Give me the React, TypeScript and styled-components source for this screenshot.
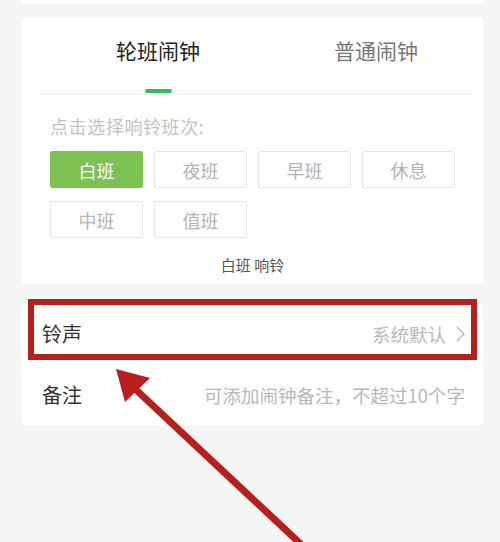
import React from "react";
import styled, { createGlobalStyle } from "styled-components";

const Global = createGlobalStyle`
  html, body { margin: 0; padding: 0; background: #f5f5f5; }
  body { font-family: "Noto Sans CJK SC", "Noto Sans", sans-serif; }
`;

const Page = styled.div`
  position: relative;
  width: 500px;
  height: 542px;
  overflow: hidden;
  background: #f5f5f5;
  padding: 0 17px 0 22px;
  box-sizing: border-box;
  display: flex;
  flex-direction: column;
`;

const Stub = styled.div`
  height: 4px;
  background: #fff;
`;

const Card = styled.div<{ $top: number }>`
  margin-top: ${(p) => p.$top}px;
  background: #fff;
  border-radius: 2px;
`;

const Tabs = styled.div`
  display: grid;
  grid-template-columns: 218px 218px;
  padding-left: 27px;
`;

const Tab = styled.div<{ $active?: boolean }>`
  display: flex;
  flex-direction: column;
  align-items: center;
  padding-top: 18px;
  font-size: 21px;
  line-height: 28px;
  color: ${(p) => (p.$active ? "#222" : "#777")};
`;

const Indicator = styled.div<{ $show?: boolean }>`
  margin-top: 25px;
  width: 27px;
  height: 4px;
  border-radius: 2px;
  background: ${(p) => (p.$show ? "#3db45e" : "transparent")};
`;

const Divider = styled.div`
  height: 1px;
  margin: 1px 11px 0 16px;
  background: #efefef;
`;

const Body = styled.div`
  padding: 19px 0 9px 28px;
  display: flex;
  flex-direction: column;
`;

const Hint = styled.div`
  font-size: 18px;
  line-height: 24px;
  letter-spacing: 0.6px;
  color: #c2c2c2;
`;

const Grid = styled.div`
  margin-top: 13px;
  display: grid;
  grid-template-columns: repeat(4, 93px);
  column-gap: 11px;
  row-gap: 13px;
`;

const Shift = styled.div<{ $selected?: boolean }>`
  height: 37px;
  box-sizing: border-box;
  display: flex;
  align-items: center;
  justify-content: center;
  font-size: 18px;
  border-radius: 2px;
  border: 1px solid ${(p) => (p.$selected ? "#7cc152" : "#e6e6e6")};
  background: ${(p) => (p.$selected ? "#7cc152" : "#fff")};
  color: ${(p) => (p.$selected ? "#fff" : "#b3b3b3")};
`;

const Status = styled.div`
  margin: 17px 28px 0 0;
  text-align: center;
  font-size: 15px;
  line-height: 20px;
  color: #555;
`;

const Row = styled.div`
  position: relative;
  height: 61px;
  display: flex;
  align-items: center;
  justify-content: space-between;
  padding: 0 18px 0 20px;
`;

const Label = styled.div`
  font-size: 20px;
  color: #333;
`;

const Value = styled.div`
  font-size: 18.5px;
  color: #b8b8b8;
  display: flex;
  align-items: center;
  gap: 10px;
`;

const Highlight = styled.div`
  position: absolute;
  top: -4px;
  bottom: 4px;
  left: 6px;
  right: 6px;
  border: 6px solid #b71f1a;
  pointer-events: none;
`;

const Arrow = styled.svg`
  position: absolute;
  left: 0;
  top: 0;
  pointer-events: none;
`;

const shifts = ["白班", "夜班", "早班", "休息", "中班", "值班"];

export default function App() {
  return (
    <>
      <Global />
      <Page>
        <Stub />
        <Card $top={14}>
          <Tabs>
            <Tab $active>
              轮班闹钟
              <Indicator $show />
            </Tab>
            <Tab>
              普通闹钟
              <Indicator />
            </Tab>
          </Tabs>
          <Divider />
          <Body>
            <Hint>点击选择响铃班次:</Hint>
            <Grid>
              {shifts.map((s, i) => (
                <Shift key={s} $selected={i === 0}>
                  {s}
                </Shift>
              ))}
            </Grid>
            <Status>白班 响铃</Status>
          </Body>
        </Card>
        <Card $top={19}>
          <Row>
            <Label>铃声</Label>
            <Value>
              系统默认
              <svg width="9" height="16" viewBox="0 0 9 16">
                <path d="M1 1 L8 8 L1 15" fill="none" stroke="#b8b8b8" strokeWidth="1.4" />
              </svg>
            </Value>
            <Highlight />
          </Row>
          <Row>
            <Label>备注</Label>
            <Value>可添加闹钟备注，不超过10个字</Value>
          </Row>
        </Card>
        <Arrow width="500" height="542" viewBox="0 0 500 542">
          <line x1="132" y1="386" x2="305" y2="548" stroke="#b71f1a" strokeWidth="7" />
          <polygon points="116,369 150,378 125,402" fill="#b71f1a" />
        </Arrow>
      </Page>
    </>
  );
}
